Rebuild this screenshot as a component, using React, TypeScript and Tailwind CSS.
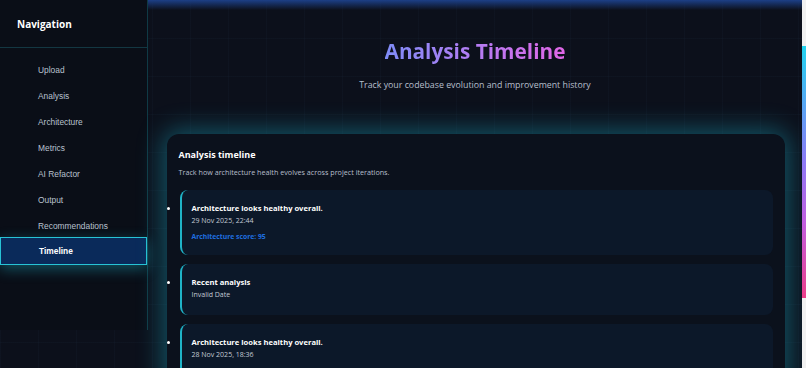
const navItems = [
  "Upload",
  "Analysis",
  "Architecture",
  "Metrics",
  "AI Refactor",
  "Output",
  "Recommendations",
  "Timeline",
];

const entries = [
  { title: "Architecture looks healthy overall.", date: "29 Nov 2025, 22:44", score: 95 },
  { title: "Recent analysis", date: "Invalid Date", score: null },
  { title: "Architecture looks healthy overall.", date: "28 Nov 2025, 18:36", score: 95 },
];

function Sidebar() {
  return (
    <aside className="w-[148px] h-[330px] shrink-0 bg-[#0a0e17] border-r border-[#0f3a45] flex flex-col">
      <div className="h-[48px] border-b border-[#133742] flex items-center px-[17px] pt-[2px]">
        <span className="text-[10px] font-bold text-white">Navigation</span>
      </div>
      <nav className="pt-[9px] flex flex-col" style={{ fontFamily: '"Liberation Sans", Arial, sans-serif' }}>
        {navItems.map((item) => {
          const active = item === "Timeline";
          return (
            <div
              key={item}
              className={
                active
                  ? "h-[28px] -mt-[2px] flex items-center pl-[38px] bg-[#0a2a5a] border border-[#27c3d6] text-white text-[8.4px] font-semibold shadow-[0_4px_14px_rgba(34,211,238,0.35)]"
                  : "h-[26px] flex items-center pl-[38px] text-[#b9c2cf] text-[8.4px]"
              }
            >
              {item}
            </div>
          );
        })}
      </nav>
    </aside>
  );
}

function TimelineItem({ title, date, score }: { title: string; date: string; score: number | null }) {
  return (
    <li className="marker:text-white marker:text-[9px]">
      <div className="rounded-lg border-l-2 border-[#1fb3c7] bg-[#0c1829] pl-[10px] pt-[12px] pb-[12px]">
        <div className="text-[7.6px] font-bold text-white leading-[12px]">{title}</div>
        <div className="text-[7px] text-[#c3cad4] leading-[12px] mt-[1px]">{date}</div>
        {score !== null && (
          <div className="text-[6.8px] font-bold text-[#1f6fe0] leading-[12px] mt-[4px]">
            Architecture score: {score}
          </div>
        )}
        {score === null && <div className="h-[2px]" />}
      </div>
    </li>
  );
}

export default function App() {
  return (
    <div
      className="w-[806px] h-[368px] overflow-hidden flex bg-[#0c101b] text-white relative"
      style={{ fontFamily: '"Open Sans", "Noto Sans", sans-serif' }}
    >
      <div className="absolute inset-0 bg-[linear-gradient(rgba(60,90,130,0.06)_1px,transparent_1px),linear-gradient(90deg,rgba(60,90,130,0.06)_1px,transparent_1px)] bg-[size:38px_38px]" />
      <div className="absolute left-0 right-0 top-0 h-[10px] bg-[linear-gradient(to_bottom,#1c3f86,rgba(12,16,27,0))]" />

      <div className="relative flex w-full">
        <Sidebar />

        <main className="flex-1 flex flex-col items-center pt-[37px] px-[18px]">
          <h1 className="text-[20.8px] font-bold leading-[28px] bg-[linear-gradient(90deg,#7f8cf7,#b57cf3,#e066e6)] bg-clip-text text-transparent">
            Analysis Timeline
          </h1>
          <p className="mt-[14px] text-[8.8px] leading-[12px] text-[#b7bfcc]">
            Track your codebase evolution and improvement history
          </p>

          <section className="mt-[43px] w-full ml-[1px] rounded-[12px] bg-[#0b111c] shadow-[0_0_26px_4px_rgba(27,170,195,0.45)] px-[12px] pt-[14px] h-[400px]">
            <h2 className="text-[9px] font-bold text-white leading-[14px]">Analysis timeline</h2>
            <p className="mt-[4px] text-[7.2px] text-[#b7bfcc] leading-[12px]">
              Track how architecture health evolves across project iterations.
            </p>
            <ul className="list-disc pl-px mt-[12px] flex flex-col gap-[9px]">
              {entries.map((e, i) => (
                <TimelineItem key={i} {...e} />
              ))}
            </ul>
          </section>
        </main>

        <div className="w-[4px] shrink-0 bg-[#f1f1f1] pt-[46px]">
          <div className="h-[252px] w-full bg-[linear-gradient(to_bottom,#22d3ee,#8b7cf6_45%,#c15fe0_70%,#ec3f8a)]" />
        </div>
      </div>
    </div>
  );
}
